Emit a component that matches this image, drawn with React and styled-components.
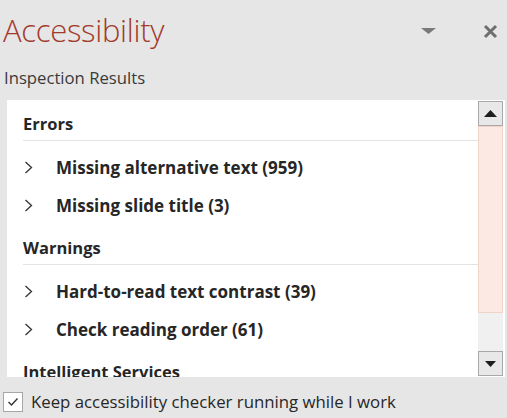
import React from "react";
import styled, { createGlobalStyle } from "styled-components";

const Global = createGlobalStyle`
  html, body { margin: 0; padding: 0; background: #e6e6e6; }
  body { font-family: "Open Sans", "Noto Sans", sans-serif; }
`;

const Pane = styled.div`
  width: 507px;
  height: 418px;
  background: #e6e6e6;
  display: flex;
  flex-direction: column;
  overflow: hidden;
`;

const TitleBar = styled.div`
  height: 62px;
  display: flex;
  align-items: center;
  padding-left: 3px;
`;

const Title = styled.div`
  flex: 1;
  font-family: "Open Sans", sans-serif;
  font-weight: 300;
  font-size: 31px;
  color: #a23a2c;
  letter-spacing: -0.3px;
  padding-bottom: 2px;
`;

const IconButton = styled.div`
  width: ${(p) => p.$w}px;
  margin-right: ${(p) => p.$mr || 0}px;
  display: flex;
  justify-content: center;
  align-items: center;
`;

const SubTitle = styled.div`
  height: 38px;
  padding-left: 4px;
  font-size: 16.7px;
  line-height: 32px;
  color: #3a3a3a;
`;

const Panel = styled.div`
  margin-left: 7px;
  width: 498px;
  height: 277px;
  background: #ffffff;
  display: flex;
`;

const List = styled.div`
  flex: 1;
  padding-left: 16px;
  overflow: hidden;
`;

const SectionHeader = styled.div`
  padding-top: 8px;
  line-height: 32px;
  height: 32px;
  font-weight: 700;
  font-size: 16.5px;
  color: #262626;
  border-bottom: 1px solid ${(p) => (p.$line ? "#e3e3e3" : "transparent")};
`;

const Items = styled.div`
  padding-top: 7px;
`;

const Item = styled.div`
  height: 38px;
  display: flex;
  align-items: center;
  font-weight: 700;
  font-size: 17px;
  color: #262626;
`;

const Chevron = styled.span`
  width: 33px;
  display: flex;
  padding-left: 1px;
  box-sizing: border-box;
`;

const Scrollbar = styled.div`
  width: 25px;
  margin: 1px 2px 1px 0;
  display: flex;
  flex-direction: column;
`;

const ArrowButton = styled.div`
  height: 25px;
  box-sizing: border-box;
  border: 1px solid #a8a8a8;
  background: #e8e8e8;
  display: flex;
  align-items: center;
  justify-content: center;
`;

const Thumb = styled.div`
  height: 187px;
  box-sizing: border-box;
  background: #fce9e3;
  border: 1px solid #f3d2c8;
`;

const Track = styled.div`
  flex: 1;
  background: #f0f0f0;
`;

const Footer = styled.label`
  flex: 1;
  display: flex;
  align-items: center;
  padding-left: 3px;
  padding-top: 8px;
  gap: 8px;
  font-size: 16.8px;
  color: #262626;
`;

const Box = styled.span`
  width: 20px;
  height: 20px;
  box-sizing: border-box;
  border: 1px solid #a6a6a6;
  background: #ffffff;
  display: flex;
  align-items: center;
  justify-content: center;
`;

const ChevronIcon = () => (
  <svg width="9" height="13" viewBox="0 0 9 13">
    <path d="M1.5 1 L7.5 6.5 L1.5 12" fill="none" stroke="#333" strokeWidth="1.3" />
  </svg>
);

const sections = [
  { title: "Errors", items: ["Missing alternative text (959)", "Missing slide title (3)"] },
  { title: "Warnings", items: ["Hard-to-read text contrast (39)", "Check reading order (61)"] },
  { title: "Intelligent Services", items: [] },
];

export default function App() {
  return (
    <>
      <Global />
      <Pane>
        <TitleBar>
          <Title>Accessibility</Title>
          <IconButton $w={50} $mr={20}>
            <svg width="15" height="7" viewBox="0 0 15 7">
              <path d="M0 0 H15 L7.5 6 Z" fill="#7a7a7a" />
            </svg>
          </IconButton>
          <IconButton $w={34}>
            <svg width="15" height="15" viewBox="0 0 15 15">
              <path d="M2 2 L13 13 M13 2 L2 13" stroke="#6e6e6e" strokeWidth="3" />
            </svg>
          </IconButton>
        </TitleBar>
        <SubTitle>Inspection Results</SubTitle>
        <Panel>
          <List>
            {sections.map((s) => (
              <div key={s.title}>
                <SectionHeader $line={s.items.length > 0}>{s.title}</SectionHeader>
                {s.items.length > 0 && (
                  <Items>
                    {s.items.map((it) => (
                      <Item key={it}>
                        <Chevron>
                          <ChevronIcon />
                        </Chevron>
                        {it}
                      </Item>
                    ))}
                  </Items>
                )}
              </div>
            ))}
          </List>
          <Scrollbar>
            <ArrowButton>
              <svg width="13" height="7" viewBox="0 0 13 7">
                <path d="M0 7 H13 L6.5 0 Z" fill="#1e1e1e" />
              </svg>
            </ArrowButton>
            <Thumb />
            <Track />
            <ArrowButton>
              <svg width="11" height="6" viewBox="0 0 11 6">
                <path d="M0 0 H11 L5.5 6 Z" fill="#1e1e1e" />
              </svg>
            </ArrowButton>
          </Scrollbar>
        </Panel>
        <Footer>
          <Box>
            <svg width="12" height="10" viewBox="0 0 12 10">
              <path d="M1.5 5 L4.5 8 L10.5 1.5" fill="none" stroke="#333" strokeWidth="1.4" />
            </svg>
          </Box>
          Keep accessibility checker running while I work
        </Footer>
      </Pane>
    </>
  );
}
